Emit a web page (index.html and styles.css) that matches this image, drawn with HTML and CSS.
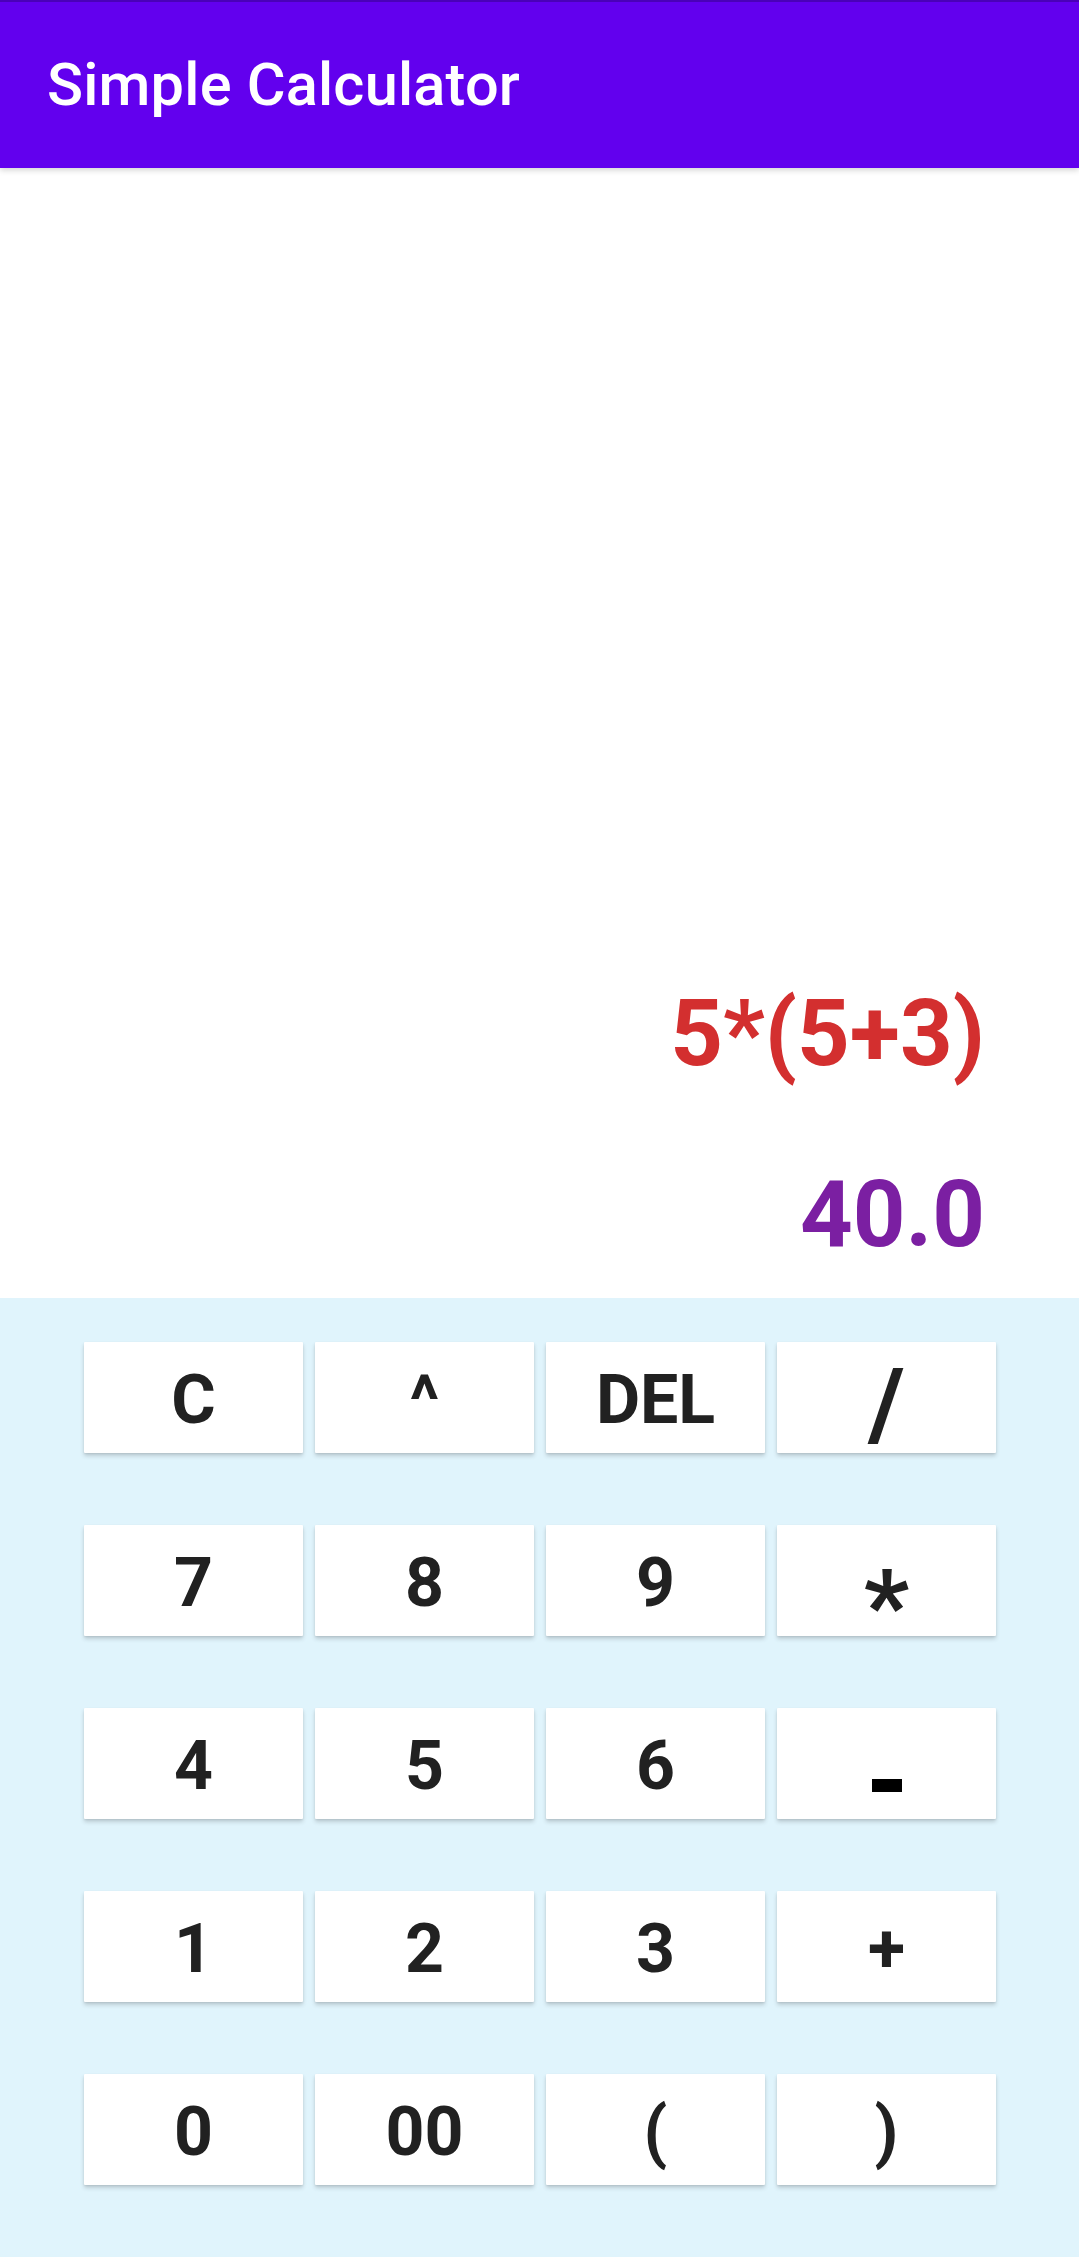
FILE: index.html
```html
<!DOCTYPE html>
<html lang="en">
<head>
<meta charset="utf-8">
<title>Simple Calculator</title>
<link rel="stylesheet" href="styles.css">
</head>
<body>
<div class="app">
  <header class="toolbar">
    <h1 class="title">Simple Calculator</h1>
  </header>
  <section class="display">
    <div class="expression">5*(5+3)</div>
    <div class="result">40.0</div>
  </section>
  <section class="keypad">
    <button class="key">C</button>
    <button class="key">^</button>
    <button class="key">DEL</button>
    <button class="key key-slash">/</button>
    <button class="key">7</button>
    <button class="key">8</button>
    <button class="key">9</button>
    <button class="key key-star"><span class="star">*</span></button>
    <button class="key">4</button>
    <button class="key">5</button>
    <button class="key">6</button>
    <button class="key key-minus"><span class="minus" aria-label="-"></span></button>
    <button class="key">1</button>
    <button class="key">2</button>
    <button class="key">3</button>
    <button class="key">+</button>
    <button class="key">0</button>
    <button class="key">00</button>
    <button class="key">(</button>
    <button class="key">)</button>
  </section>
</div>
</body>
</html>
```

FILE: styles.css
```css
* {
  box-sizing: border-box;
}

html, body {
  margin: 0;
  padding: 0;
  background: #ffffff;
}

body {
  font-family: Roboto, "Noto Sans", "Liberation Sans", sans-serif;
  width: 1079px;
  height: 2257px;
  overflow: hidden;
}

.app {
  display: flex;
  flex-direction: column;
  height: 2257px;
}

.toolbar {
  height: 168px;
  background: #6200ee;
  border-top: 2px solid #4a00b8;
  display: flex;
  align-items: center;
  padding-left: 47px;
  box-shadow: 0 2px 6px rgba(0, 0, 0, 0.18);
  position: relative;
  z-index: 1;
  flex-shrink: 0;
}

.title {
  margin: 0;
  color: #ffffff;
  font-size: 59.5px;
  font-weight: 500;
  letter-spacing: 0.2px;
  line-height: 1;
  padding-top: 2px;
}

.display {
  flex: 1;
  display: flex;
  flex-direction: column;
  align-items: flex-end;
  justify-content: flex-end;
  padding-right: 94px;
  padding-bottom: 23px;
  background: #ffffff;
}

.expression,
.result {
  font-size: 92px;
  font-weight: 700;
  line-height: 120px;
  height: 120px;
}

.expression {
  color: #d32f2f;
}

.result {
  color: #7b1fa2;
  margin-top: 61px;
}

.keypad {
  height: 959px;
  flex-shrink: 0;
  background: #e0f4fc;
  padding: 44px 83px 72px 84px;
  display: grid;
  grid-template-columns: repeat(4, 219px);
  grid-auto-rows: 111px;
  column-gap: 12px;
  row-gap: 72px;
}

.key {
  border: none;
  margin: 0;
  padding: 0;
  background: #ffffff;
  color: #212121;
  font-family: Roboto, "Noto Sans", "Liberation Sans", sans-serif;
  font-size: 68px;
  font-weight: 700;
  line-height: 1;
  display: flex;
  align-items: center;
  justify-content: center;
  box-shadow: 0 3px 4px rgba(0, 0, 0, 0.16), 0 1px 2px rgba(0, 0, 0, 0.08);
  border-radius: 1px;
  padding-top: 4px;
}

.key-slash {
  font-size: 98px;
  padding-top: 14px;
}

.star {
  font-size: 100px;
  line-height: 1;
  padding-top: 46px;
}

.minus {
  display: block;
  width: 30px;
  height: 13px;
  background: #000000;
  margin-top: 40px;
}
```
